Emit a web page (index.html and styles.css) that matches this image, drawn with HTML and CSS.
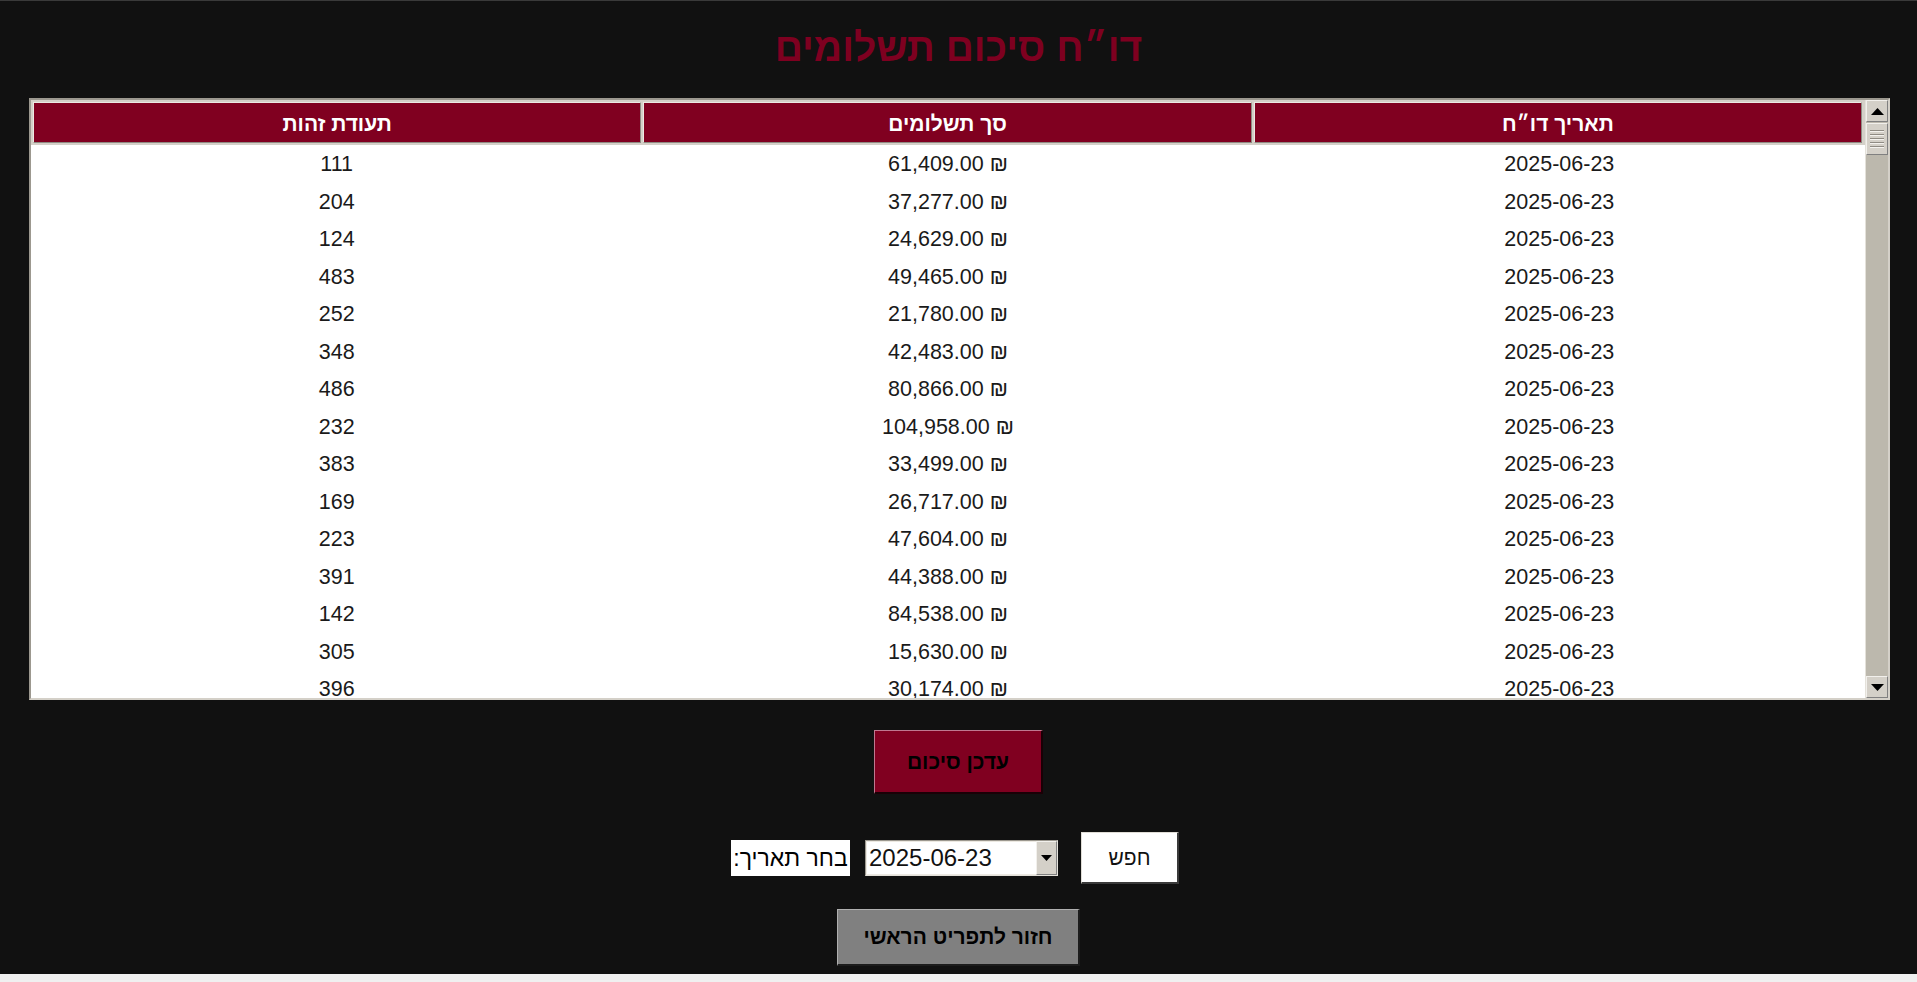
FILE: index.html
```html
<!DOCTYPE html>
<html lang="he">
<head>
<meta charset="utf-8">
<title>דו״ח סיכום תשלומים</title>
<link rel="stylesheet" href="styles.css">
</head>
<body>
<div class="frame">
  <div class="title-bar"><h1 class="title" dir="rtl">דו״ח סיכום תשלומים</h1></div>

  <div class="scrollpane">
    <div class="viewport">
      <div class="thead" dir="rtl">
        <div class="th">תאריך דו״ח</div>
        <div class="th">סך תשלומים</div>
        <div class="th">תעודת זהות</div>
      </div>
      <div class="tbody" dir="rtl">
        <div class="tr"><div class="td">2025-06-23</div><div class="td"><span dir="ltr">61,409.00 ₪</span></div><div class="td">111</div></div>
        <div class="tr"><div class="td">2025-06-23</div><div class="td"><span dir="ltr">37,277.00 ₪</span></div><div class="td">204</div></div>
        <div class="tr"><div class="td">2025-06-23</div><div class="td"><span dir="ltr">24,629.00 ₪</span></div><div class="td">124</div></div>
        <div class="tr"><div class="td">2025-06-23</div><div class="td"><span dir="ltr">49,465.00 ₪</span></div><div class="td">483</div></div>
        <div class="tr"><div class="td">2025-06-23</div><div class="td"><span dir="ltr">21,780.00 ₪</span></div><div class="td">252</div></div>
        <div class="tr"><div class="td">2025-06-23</div><div class="td"><span dir="ltr">42,483.00 ₪</span></div><div class="td">348</div></div>
        <div class="tr"><div class="td">2025-06-23</div><div class="td"><span dir="ltr">80,866.00 ₪</span></div><div class="td">486</div></div>
        <div class="tr"><div class="td">2025-06-23</div><div class="td"><span dir="ltr">104,958.00 ₪</span></div><div class="td">232</div></div>
        <div class="tr"><div class="td">2025-06-23</div><div class="td"><span dir="ltr">33,499.00 ₪</span></div><div class="td">383</div></div>
        <div class="tr"><div class="td">2025-06-23</div><div class="td"><span dir="ltr">26,717.00 ₪</span></div><div class="td">169</div></div>
        <div class="tr"><div class="td">2025-06-23</div><div class="td"><span dir="ltr">47,604.00 ₪</span></div><div class="td">223</div></div>
        <div class="tr"><div class="td">2025-06-23</div><div class="td"><span dir="ltr">44,388.00 ₪</span></div><div class="td">391</div></div>
        <div class="tr"><div class="td">2025-06-23</div><div class="td"><span dir="ltr">84,538.00 ₪</span></div><div class="td">142</div></div>
        <div class="tr"><div class="td">2025-06-23</div><div class="td"><span dir="ltr">15,630.00 ₪</span></div><div class="td">305</div></div>
        <div class="tr"><div class="td">2025-06-23</div><div class="td"><span dir="ltr">30,174.00 ₪</span></div><div class="td">396</div></div>
      </div>
    </div>
    <div class="scrollbar">
      <div class="sb-btn"><svg width="13" height="7" viewBox="0 0 13 7"><polygon points="6.5,0 13,7 0,7" fill="#000"/></svg></div>
      <div class="sb-track">
        <div class="sb-thumb">
          <span class="grip"></span><span class="grip"></span><span class="grip"></span><span class="grip"></span><span class="grip"></span>
        </div>
      </div>
      <div class="sb-btn"><svg width="13" height="7" viewBox="0 0 13 7"><polygon points="0,0 13,0 6.5,7" fill="#000"/></svg></div>
    </div>
  </div>

  <div class="actions">
    <button class="btn-update" dir="rtl">עדכן סיכום</button>
  </div>

  <div class="search-row">
    <div class="date-label" dir="rtl">בחר תאריך:</div>
    <div class="combo">
      <div class="combo-text">2025-06-23</div>
      <div class="combo-arrow"><svg width="11" height="6" viewBox="0 0 11 6"><polygon points="0,0 11,0 5.5,6" fill="#000"/></svg></div>
    </div>
    <button class="btn-search" dir="rtl">חפש</button>
  </div>

  <div class="back-row">
    <button class="btn-back" dir="rtl">חזור לתפריט הראשי</button>
  </div>
</div>
<div class="status-strip"></div>
</body>
</html>
```

FILE: styles.css
```css
* { box-sizing: border-box; }

html, body {
  margin: 0;
  padding: 0;
}

body {
  width: 1917px;
  height: 982px;
  overflow: hidden;
  background: #111111;
  font-family: "Liberation Sans", Arial, sans-serif;
}

.frame {
  height: 974px;
  display: flex;
  flex-direction: column;
  border-top: 1px solid #3a3a3a;
}

.title-bar {
  height: 97px;
  display: flex;
  justify-content: center;
}

.title {
  margin: 0;
  line-height: 93px;
  font-size: 39px;
  font-weight: bold;
  color: #7e0020;
}

.scrollpane {
  margin: 0 27px 0 29px;
  height: 602px;
  display: flex;
  border: 2px solid;
  border-color: #9c988f #d4d0c8 #d4d0c8 #9c988f;
  background: #ffffff;
}

.viewport {
  flex: 1;
  overflow: hidden;
  display: flex;
  flex-direction: column;
}

.thead {
  display: grid;
  grid-template-columns: repeat(3, 1fr);
  column-gap: 2px;
  padding: 2px 3px 2px 2px;
  background: #d4d0c8;
  height: 45px;
  flex: none;
}

.th {
  background: #800020;
  border: 1px solid;
  border-color: #ece9e2 #8f8b83 #8f8b83 #ece9e2;
  color: #ffffff;
  font-weight: bold;
  font-size: 21px;
  display: flex;
  align-items: center;
  justify-content: center;
  padding-top: 2px;
}

.tbody {
  display: flex;
  flex-direction: column;
  padding-top: 1px;
}

.tr {
  display: grid;
  grid-template-columns: repeat(3, 1fr);
  height: 37.5px;
  flex: none;
}

.td {
  display: flex;
  align-items: center;
  justify-content: center;
  font-size: 21.5px;
  color: #1a1a1a;
}

.scrollbar {
  width: 23px;
  flex: none;
  display: flex;
  flex-direction: column;
  background: #bcb8ad;
  border-left: 1px solid #e4e1da;
}

.sb-btn {
  height: 22px;
  flex: none;
  background: #d4d0c8;
  border: 1px solid;
  border-color: #f2f0ec #808080 #808080 #f2f0ec;
  display: flex;
  align-items: center;
  justify-content: center;
}

.sb-track {
  flex: 1;
  padding-top: 1px;
}

.sb-thumb {
  height: 32px;
  background: #d4d0c8;
  border: 1px solid;
  border-color: #f2f0ec #808080 #808080 #f2f0ec;
  display: flex;
  flex-direction: column;
  justify-content: center;
  gap: 2px;
  padding: 0 3px;
}

.grip {
  display: block;
  height: 1px;
  background: #8f8b83;
  border-bottom: 1px solid #f4f2ee;
  box-sizing: content-box;
}

.actions {
  display: flex;
  justify-content: center;
  padding-top: 30px;
}

.btn-update {
  width: 169px;
  height: 64px;
  background: #800020;
  border: 1px solid;
  border-color: #c07890 #1a0006 #1a0006 #c07890;
  border-width: 1px 2px 2px 1px;
  font-family: "Liberation Sans", Arial, sans-serif;
  font-weight: bold;
  font-size: 21px;
  color: #000000;
  padding: 0;
}

.search-row {
  margin-top: 38px;
  height: 52px;
  display: flex;
  justify-content: center;
  align-items: center;
  padding-right: 7px;
}

.date-label {
  width: 119px;
  height: 36px;
  background: #ffffff;
  font-size: 23px;
  color: #000;
  display: flex;
  align-items: center;
  justify-content: center;
  margin-right: 15px;
  white-space: nowrap;
}

.combo {
  width: 193px;
  height: 36px;
  display: flex;
  border: 1px solid;
  border-color: #9c988f #e4e1da #e4e1da #9c988f;
  background: #ffffff;
  margin-right: 23px;
}

.combo-text {
  flex: 1;
  font-size: 24px;
  color: #111;
  display: flex;
  align-items: center;
  padding-left: 2px;
  border: 1px solid #ece9e2;
  border-right: none;
}

.combo-arrow {
  width: 21px;
  flex: none;
  background: #d4d0c8;
  border: 1px solid;
  border-color: #f2f0ec #808080 #808080 #f2f0ec;
  display: flex;
  align-items: center;
  justify-content: center;
}

.btn-search {
  width: 98px;
  height: 52px;
  background: #ffffff;
  border: 1px solid;
  border-color: #e0ddd6 #3a3a3a #3a3a3a #e0ddd6;
  border-width: 1px 2px 2px 1px;
  font-family: "Liberation Sans", Arial, sans-serif;
  font-size: 21px;
  color: #111;
  padding: 0;
}

.back-row {
  display: flex;
  justify-content: center;
  margin-top: 25px;
}

.btn-back {
  width: 243px;
  height: 57px;
  background: #808080;
  border: 1px solid;
  border-color: #b0b0b0 #1c1c1c #1c1c1c #b0b0b0;
  border-width: 1px 2px 2px 1px;
  font-family: "Liberation Sans", Arial, sans-serif;
  font-weight: bold;
  font-size: 21px;
  color: #000000;
  padding: 0;
}

.status-strip {
  height: 8px;
  background: #f0f0f0;
}
```
